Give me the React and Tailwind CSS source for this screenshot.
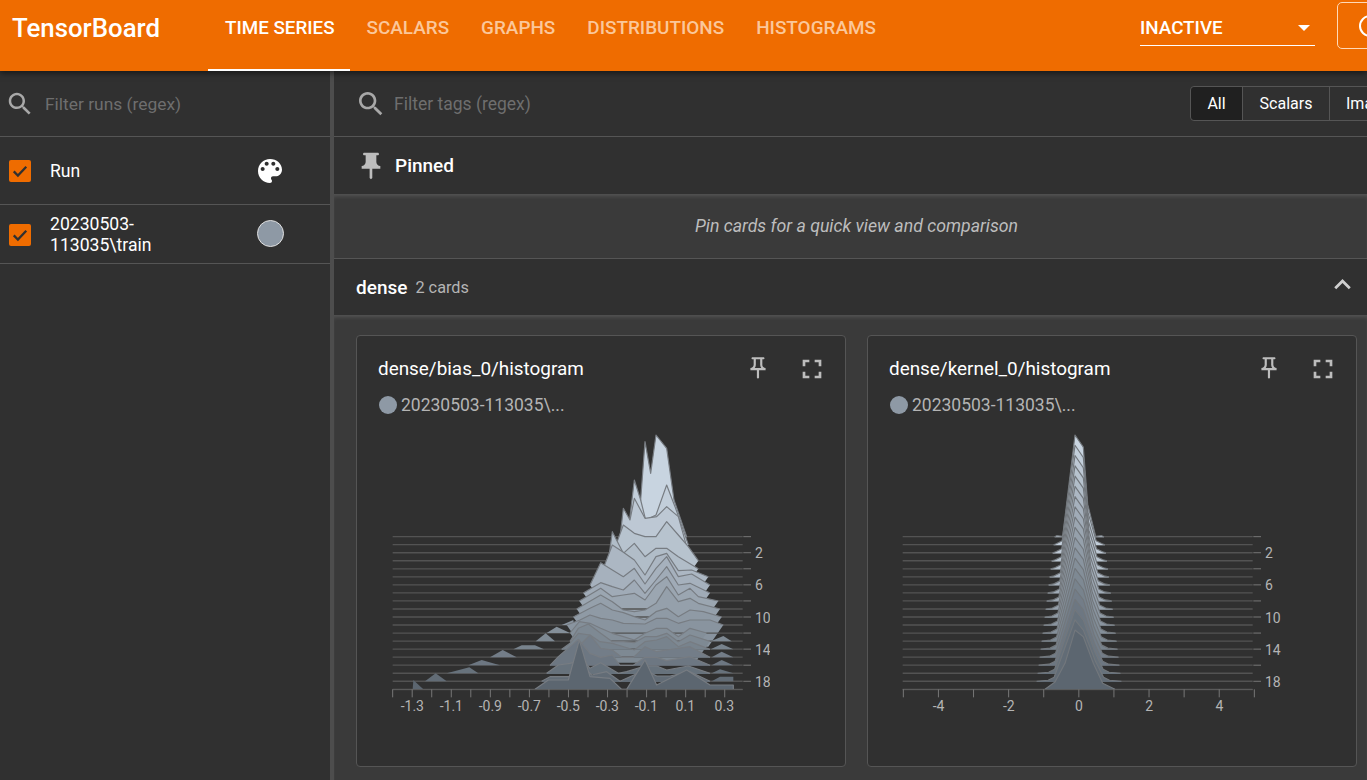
import React from "react";

const SEARCH = "M15.5 14h-.79l-.28-.27C15.41 12.59 16 11.11 16 9.5 16 5.91 13.09 3 9.5 3S3 5.91 3 9.5 5.91 16 9.5 16c1.61 0 3.09-.59 4.23-1.57l.27.28v.79l5 4.99L20.49 19l-4.99-5zm-6 0C7.01 14 5 11.99 5 9.5S7.01 5 9.5 5 14 7.01 14 9.5 11.99 14 9.5 14z";
const PALETTE = "M12 3c-4.97 0-9 4.03-9 9s4.03 9 9 9c.83 0 1.5-.67 1.5-1.5 0-.39-.15-.74-.39-1.01-.23-.26-.38-.61-.38-.99 0-.83.67-1.5 1.5-1.5H16c2.76 0 5-2.24 5-5 0-4.42-4.03-8-9-8zm-5.5 9c-.83 0-1.5-.67-1.5-1.5S5.67 9 6.5 9 8 9.67 8 10.5 7.33 12 6.5 12zm3-4C8.67 8 8 7.33 8 6.5S8.67 5 9.5 5s1.5.67 1.5 1.5S10.33 8 9.5 8zm5 0c-.83 0-1.5-.67-1.5-1.5S13.67 5 14.5 5s1.5.67 1.5 1.5S15.33 8 14.5 8zm3 4c-.83 0-1.5-.67-1.5-1.5S16.67 9 17.5 9s1.5.67 1.5 1.5-.67 1.5-1.5 1.5z";
const PIN = "M16 9V4h1c.55 0 1-.45 1-1s-.45-1-1-1H7c-.55 0-1 .45-1 1s.45 1 1 1h1v5c0 1.66-1.34 3-3 3v2h5.97v7l1 1 1-1v-7H19v-2c-1.66 0-3-1.34-3-3z";
const PIN_OUTLINE = "M14 4v5c0 1.12.37 2.16 1 3H9c.65-.86 1-1.9 1-3V4h4m3-2H7c-.55 0-1 .45-1 1s.45 1 1 1h1v5c0 1.66-1.34 3-3 3v2h5.97v7l1 1 1-1v-7H19v-2c-1.66 0-3-1.34-3-3V4h1c.55 0 1-.45 1-1s-.45-1-1-1z";
const FULLSCREEN = "M7 14H5v5h5v-2H7v-3zm-2-4h2V7h3V5H5v5zm12 7h-3v2h5v-5h-2v3zM14 5v2h3v3h2V5h-5z";
const EXPAND_LESS = "M12 8l-6 6 1.41 1.41L12 10.83l4.59 4.58L18 14z";

const Icon = ({ d, className }) => (
  <svg viewBox="0 0 24 24" fill="currentColor" className={className}>
    <path d={d} />
  </svg>
);

// ridge baselines, in 3x coordinates of the chart box
const baseY = (k) => 350 + k * 24.1;

const mix = (k) => {
  const t = k / 19;
  const a = [200, 212, 224];
  const b = [92, 102, 112];
  return `rgb(${a.map((v, i) => Math.round(v + (b[i] - v) * t)).join(",")})`;
};

const BIAS = [
  [[800,350],[812,240],[825,65],[842,160],[858,45],[890,85],[912,240],[950,350]],
  [[770,374],[793,180],[812,240],[827,300],[858,285],[890,195],[915,260],[955,374]],
  [[745,398],[760,265],[780,300],[793,235],[825,295],[860,290],[890,260],[925,290],[955,398]],
  [[720,422],[760,315],[793,340],[825,350],[858,350],[890,305],[925,345],[955,380],[985,422]],
  [[712,446],[727,335],[760,400],[793,370],[825,410],[858,385],[890,385],[925,410],[985,446]],
  [[690,470],[727,375],[758,395],[793,420],[825,465],[858,410],[890,400],[925,452],[965,450],[1015,470]],
  [[660,495],[692,428],[727,450],[760,470],[793,445],[825,492],[858,445],[890,410],[925,470],[965,462],[1020,495]],
  [[640,519],[692,488],[727,500],[760,510],[793,480],[825,520],[858,480],[890,440],[925,495],[960,490],[1020,519]],
  [[628,543],[692,505],[727,530],[760,525],[793,520],[825,540],[858,495],[890,470],[925,525],[960,505],[985,530],[1045,543]],
  [[620,567],[692,525],[727,545],[760,570],[793,575],[825,570],[858,550],[890,500],[925,545],[960,535],[985,550],[1050,567]],
  [[610,591],[660,565],[692,550],[727,570],[760,578],[793,590],[825,600],[858,575],[890,565],[925,590],[960,570],[1000,575],[1055,591]],
  [[590,615],[630,600],[660,585],[692,595],[727,600],[760,610],[825,612],[860,595],[890,595],[925,610],[960,600],[1020,600],[1060,615]],
  [[600,639],[628,605],[660,610],[692,625],[727,640],[760,650],[793,660],[825,640],[860,625],[890,625],[925,650],[960,625],[1010,639]],
  [[600,664],[625,625],[655,612],[692,640],[727,665],[760,665],[793,668],[825,650],[860,650],[890,640],[925,665],[960,645],[1020,664]],
  [[575,688],[600,670],[625,640],[660,645],[690,665],[727,670],[793,690],[825,665],[860,660],[890,650],[925,680],[960,665],[1020,688]],
  [[565,712],[600,680],[630,675],[660,645],[692,685],[727,690],[755,712],[790,712],[825,680],[860,695],[890,690],[960,680],[1020,712]],
  [[540,736],[565,710],[625,658],[660,700],[692,712],[727,705],[750,736],[790,736],[825,712],[860,712],[890,722],[960,710],[1020,736]],
  [[530,760],[565,735],[600,730],[640,720],[660,745],[692,728],[745,760],[770,755],[825,738],[860,738],[890,750],[955,738],[1020,760]],
  [[515,784],[540,770],[600,770],[640,740],[665,765],[710,755],[750,784],[780,770],[825,750],[860,768],[900,768],[960,755],[1020,784]],
  [[495,808],[535,780],[595,780],[628,660],[660,770],[720,775],[755,808],[770,808],[825,720],[860,795],[950,750],[1020,795],[1090,795],[1090,808]],
];

const BIAS_TAILS = {
  11: [[[575,615],[610,600],[612,615]]],
  12: [[[530,639],[560,620],[600,639]]],
  13: [[[497,664],[527,640],[555,664]], [[1022,664],[1060,648],[1085,664]]],
  14: [[[430,688],[455,676],[495,676],[522,688]], [[1022,688],[1055,672],[1090,688]]],
  15: [[[360,712],[398,690],[440,712]], [[1025,712],[1055,695],[1090,712]]],
  16: [[[295,736],[335,720],[390,736]], [[1025,736],[1055,720],[1090,736]]],
  17: [[[230,760],[298,742],[325,760]], [[1025,760],[1050,748],[1090,760]]],
  18: [[[165,784],[197,760],[230,784]], [[1025,784],[1050,770],[1090,770],[1090,784]]],
  19: [[[128,808],[130,780],[160,808]]],
};

const kernelRidge = (k) => {
  const b = baseY(k);
  const tip = 45 + k * 30.8;
  const h = b - tip;
  const t = k / 19;
  const c = 597;
  if (k === 19) {
    return [[495, b], [525, b - 22], [555, b - 78], [585, tip], [610, tip + 20], [640, b - 78], [668, b - 18], [705, b]];
  }
  const wl = 45 + t * 27;
  const wr = 48 + t * 25;
  const spike = k === 0 ? 1 : 12;
  return [
    [c - wl - 28 - t * 30, b],
    [c - wl - 22, b - 3],
    [c - wl - 4, b - spike],
    [c - 12, tip],
    [c + 13, tip + h * (0.12 + t * 0.05)],
    [c + wr - 22, b - h * 0.32],
    [c + wr + 2, b - spike],
    [c + wr + 20, b - 3],
    [c + wr + 27 + t * 30, b],
  ];
};
const KERNEL = Array.from({ length: 20 }, (_, k) => kernelRidge(k));

// the body of a ridge runs on below its baseline so the stack reads as one mass
const fillPoints = (pts, k, deep) => {
  const b = baseY(k);
  const first = pts[0][0];
  const last = pts[pts.length - 1][0];
  const bottom = deep
    ? [[last - 45, b + 65], [first + 45, b + 65]]
    : [[last, b + 2], [first, b + 2]];
  return [...pts, ...bottom].map((p) => p.join(",")).join(" ");
};

const Histogram = ({ ridges, tails = {}, xTicks, xLabels, shift = 0, deepTo = 0, stroke = "#777c82" }) => (
  <svg width="400" height="300" viewBox="0 0 400 300" className="block ml-[13px] mt-[10px]">
    <g transform={`translate(${shift} 0) scale(${1 / 3})`}>
      {ridges.map((pts, k) => (
        <g key={k}>
          <line x1="68" x2="1118" y1={baseY(k)} y2={baseY(k)} stroke="#535353" strokeWidth="4" />
          {(tails[k] || []).map((tail, i) => (
            <polygon key={i} points={tail.map((p) => p.join(",")).join(" ")} fill={mix(k)} />
          ))}
          <polygon points={fillPoints(pts, k, k < deepTo)} fill={mix(k)} />
          <polyline
            points={pts.map((p) => p.join(",")).join(" ")}
            fill="none"
            stroke={stroke}
            strokeWidth="3.5"
            strokeLinejoin="round"
          />
        </g>
      ))}
      <line x1="68" x2="1118" y1="809" y2="809" stroke="#5c5c5c" strokeWidth="3" />
      {xTicks.map((x) => (
        <line key={x} x1={x} x2={x} y1="808" y2="832" stroke="#777" strokeWidth="3" />
      ))}
      {[0, 2, 4, 6, 8, 10, 12, 14, 16, 18].map((k) => (
        <line key={k} x1="1120" x2="1143" y1={baseY(k)} y2={baseY(k)} stroke="#777" strokeWidth="3" />
      ))}
    </g>
    <g fill="#b4b4b4" fontSize="14" fontFamily="Roboto, sans-serif">
      {xLabels.map(([x, label]) => (
        <text key={label} x={x + shift} y="291" textAnchor="middle">{label}</text>
      ))}
      {[2, 6, 10, 14, 18].map((label, i) => (
        <text key={label} x={385 + shift} y={138 + i * 32.25}>{label}</text>
      ))}
    </g>
  </svg>
);

const Card = ({ title, children }) => (
  <div className="w-[490px] h-[432px] shrink-0 bg-[#303030] border border-[#555] rounded-[4px]">
    <div className="flex items-center h-[64px] pl-[21px] pr-[21px]">
      <span className="flex-1 pt-[2px] text-[18.9px] text-white">{title}</span>
      <Icon d={PIN_OUTLINE} className="w-[26px] h-[26px] text-[#bdbdbd] mr-[25px]" />
      <Icon d={FULLSCREEN} className="w-[32px] h-[32px] mt-[2px] text-[#bdbdbd] mr-[-4px]" />
    </div>
    <div className="flex items-center pl-[22px] h-[10px] gap-[4px]">
      <span className="w-[18px] h-[18px] rounded-full bg-[#8e99a5]" />
      <span className="pt-[1px] text-[17.5px] text-[#b4b4b4]">20230503-113035\...</span>
    </div>
    {children}
  </div>
);

const Check = () => (
  <div className="w-[22px] h-[22px] rounded-[2px] bg-[#ef6c00] flex items-center justify-center">
    <svg viewBox="0 0 24 24" className="w-[20px] h-[20px]" fill="none" stroke="#303030" strokeWidth="2.7">
      <path d="M4.5 12.5l5 5L19.5 7" />
    </svg>
  </div>
);

const tabs = ["TIME SERIES", "SCALARS", "GRAPHS", "DISTRIBUTIONS", "HISTOGRAMS"];

export default function App() {
  const biasTicks = Array.from({ length: 18 }, (_, i) => 68 + i * 58.6);
  const biasLabels = [-1.3, -1.1, -0.9, -0.7, -0.5, -0.3, -0.1, 0.1, 0.3].map((v) => [
    42.3 + (v + 1.3) * 195,
    v.toFixed(1),
  ]);
  const kernelTicks = Array.from({ length: 11 }, (_, i) => 70 + i * 105.3);
  const kernelLabels = [-4, -2, 0, 2, 4].map((v) => [199 + v * 35.1, String(v)]);

  return (
    <div className="w-[1367px] h-[780px] overflow-hidden bg-[#303030] text-white font-['Roboto',sans-serif] flex flex-col">
      <header className="relative z-10 h-[71px] shrink-0 bg-[#ef6c00] flex items-start shadow-[0_2px_6px_rgba(0,0,0,0.55)]">
        <div className="w-[208px] pl-[12px] h-[57px] flex items-center text-[25.8px] font-medium">TensorBoard</div>
        <nav className="flex h-full">
          {tabs.map((tab, i) => (
            <div
              key={tab}
              className={
                i === 0
                  ? "pl-[17px] pr-[15px] pb-[13px] mr-[1px] flex items-center text-[18.8px] font-medium text-white border-b-2 border-white"
                  : "px-[16px] pb-[13px] flex items-center text-[18.9px] font-medium text-[#fbc79a] border-b-2 border-transparent"
              }
            >
              {tab}
            </div>
          ))}
        </nav>
        <div className="ml-auto mr-[22px] mt-[10px] w-[175px] h-[36px] border-b border-white flex items-center justify-between text-[18.8px] font-medium">
          <span className="pt-[1px]">INACTIVE</span>
          <span className="w-0 h-0 mr-[5px] border-x-[6px] border-x-transparent border-t-[6px] border-t-white" />
        </div>
        <div className="w-[60px] h-[47px] mt-[2px] mr-[-30px] border border-[#ffd9b8] rounded-[5px] flex items-center pl-[21px] shrink-0">
          <span className="w-[22px] h-[22px] rounded-full border-2 border-white shrink-0" />
        </div>
      </header>

      <div className="flex flex-1 min-h-0">
        <aside className="w-[334px] shrink-0 border-r-[4px] border-[#4d4d4d]">
          <div className="h-[66px] border-b border-[#555] flex items-center pl-[5px] gap-[10px]">
            <Icon d={SEARCH} className="w-[30px] h-[30px] text-[#a8a8a8]" />
            <span className="pt-[1px] text-[17.4px] text-[#6e6e6e]">Filter runs (regex)</span>
          </div>
          <div className="h-[68px] border-b border-[#555] flex items-center pl-[9px]">
            <Check />
            <span className="ml-[19px] pt-[1px] w-[207px] text-[17.6px]">Run</span>
            <Icon d={PALETTE} className="w-[32px] h-[32px] ml-[-3px] text-white" />
          </div>
          <div className="h-[59px] border-b border-[#555] flex items-center pl-[9px]">
            <div className="mt-[2px]"><Check /></div>
            <span className="ml-[19px] pt-[2px] w-[207px] text-[17.6px] leading-[21px]">20230503-<br />113035\train</span>
            <span className="w-[27px] h-[27px] mt-[-2px] rounded-full bg-[#8e99a5] border border-[#e0e0e0]" />
          </div>
        </aside>

        <main className="flex-1 min-w-0 flex flex-col">
          <div className="h-[66px] shrink-0 border-b border-[#555] flex items-center pl-[22px]">
            <Icon d={SEARCH} className="w-[32px] h-[32px] text-[#a8a8a8] ml-[-1px]" />
            <span className="ml-[7px] pt-[2px] text-[17.5px] text-[#6e6e6e]">Filter tags (regex)</span>
            <div className="ml-auto flex h-[35px] border border-[#555] rounded-l-[4px] text-[16px] shrink-0 mr-[-102px]">
              <div className="w-[52px] bg-[#202020] flex items-center justify-center border-r border-[#555] rounded-l-[4px]">All</div>
              <div className="w-[87px] flex items-center justify-center border-r border-[#555]">Scalars</div>
              <div className="w-[100px] pl-[16px] flex items-center">Images</div>
            </div>
            <div className="w-[38px] shrink-0" />
          </div>
          <div className="h-[57px] shrink-0 flex items-center pl-[22px] gap-[8px]">
            <Icon d={PIN} className="w-[32px] h-[32px] text-[#bdbdbd] ml-[-1px]" />
            <span className="pt-[1px] text-[19px] font-medium">Pinned</span>
          </div>
          <div className="h-[65px] shrink-0 pl-[12px] bg-[#3a3a3a] border-b border-[#555] flex items-center justify-center italic text-[17.7px] text-[#bdbdbd] shadow-[inset_0_4px_4px_-2px_rgba(255,255,255,0.14)]">
            Pin cards for a quick view and comparison
          </div>
          <div className="h-[56px] shrink-0 flex items-center pl-[22px] pr-[8px]">
            <span className="pt-[3px] text-[19px] font-medium">dense</span>
            <span className="ml-[8px] pt-[3px] text-[16.3px] text-[#b4b4b4]">2 cards</span>
            <Icon d={EXPAND_LESS} className="ml-auto mt-[-6px] w-[33px] h-[33px] text-[#cfcfcf]" />
          </div>
          <div className="flex-1 bg-[#3a3a3a] flex gap-[21px] pl-[22px] pt-[20px] shadow-[inset_0_4px_4px_-2px_rgba(255,255,255,0.14)]">
            <Card title="dense/bias_0/histogram">
              <Histogram ridges={BIAS} tails={BIAS_TAILS} xTicks={biasTicks} xLabels={biasLabels} deepTo={14} />
            </Card>
            <Card title="dense/kernel_0/histogram">
              <Histogram ridges={KERNEL} xTicks={kernelTicks} xLabels={kernelLabels} shift={-1} stroke="#72777c" />
            </Card>
          </div>
        </main>
      </div>
    </div>
  );
}
